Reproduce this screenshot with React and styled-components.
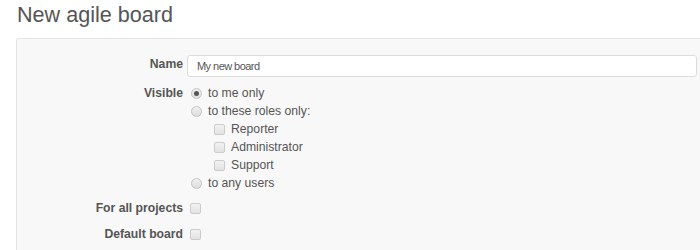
import React from "react";
import styled, { createGlobalStyle } from "styled-components";

const Global = createGlobalStyle`
  html, body {
    margin: 0;
    padding: 0;
    background: #fff;
    overflow: hidden;
  }
  body {
    font-family: "Liberation Sans", Arial, sans-serif;
    font-size: 12px;
    color: #555;
  }
`;

const Title = styled.h2`
  margin: 0;
  padding: 2px 0 0 17px;
  height: 36px;
  font-size: 21.6px;
  font-weight: normal;
  line-height: 26px;
  color: #555;
`;

const Panel = styled.div`
  margin-left: 16px;
  padding: 16px 0 10px;
  background: #f8f8f8;
  border: 1px solid #e4e4e4;
  border-right: none;
  border-radius: 3px 0 0 3px;
  display: flex;
  flex-direction: column;
  gap: 6px;
`;

const Row = styled.div`
  display: grid;
  grid-template-columns: 166px 1fr;
  column-gap: 4px;
  margin-top: ${(p) => p.$top || 0}px;
  min-height: ${(p) => p.$height || 18}px;
`;

const Label = styled.label`
  text-align: right;
  font-weight: bold;
  font-size: 12.2px;
  line-height: ${(p) => p.$line || 18}px;
  color: #555;
  white-space: nowrap;
`;

const TextInput = styled.input`
  box-sizing: border-box;
  width: 510px;
  height: 22px;
  padding: 0 9px;
  border: 1px solid #dcdcdc;
  border-radius: 3px;
  background: #fff;
  font-family: "Liberation Sans", sans-serif;
  font-size: 11px;
  letter-spacing: -0.55px;
  color: #555;
  outline: none;
`;

const Options = styled.div`
  display: flex;
  flex-direction: column;
`;

const Option = styled.label`
  display: flex;
  align-items: center;
  height: 18px;
  font-size: 12.2px;
  color: #555;
  gap: ${(p) => p.$gap || 6}px;
  padding-left: ${(p) => p.$indent || 0}px;
`;

const Radio = styled.span`
  box-sizing: border-box;
  width: 11px;
  height: 11px;
  margin-left: 4px;
  border-radius: 50%;
  border: 1px solid #c4c4c4;
  background: linear-gradient(#f0f0f0, #dedede);
  display: flex;
  align-items: center;
  justify-content: center;
  &::after {
    content: "";
    width: 5px;
    height: 5px;
    border-radius: 50%;
    background: #555;
    display: ${(p) => (p.$checked ? "block" : "none")};
  }
`;

const Check = styled.span`
  box-sizing: border-box;
  width: 11px;
  height: 11px;
  margin-left: ${(p) => p.$offset || 0}px;
  border-radius: 2px;
  border: 1px solid #cbcbcb;
  background: linear-gradient(#f2f2f2, #e2e2e2);
`;

const CheckCell = styled.div`
  display: flex;
  align-items: center;
  height: 20px;
`;

const roles = ["Reporter", "Administrator", "Support"];

export default function App() {
  return (
    <>
      <Global />
      <Title>New agile board</Title>
      <Panel>
        <Row $height={22}>
          <Label>Name</Label>
          <div>
            <TextInput defaultValue="My new board" />
          </div>
        </Row>
        <Row $top={1}>
          <Label>Visible</Label>
          <Options>
            <Option>
              <Radio $checked />
              to me only
            </Option>
            <Option>
              <Radio />
              to these roles only:
            </Option>
            {roles.map((r) => (
              <Option key={r} $indent={27} $gap={6}>
                <Check />
                {r}
              </Option>
            ))}
            <Option>
              <Radio />
              to any users
            </Option>
          </Options>
        </Row>
        <Row $height={20}>
          <Label $line={20}>For all projects</Label>
          <CheckCell>
            <Check $offset={3} />
          </CheckCell>
        </Row>
        <Row $height={20}>
          <Label $line={20}>Default board</Label>
          <CheckCell>
            <Check $offset={3} />
          </CheckCell>
        </Row>
      </Panel>
    </>
  );
}
